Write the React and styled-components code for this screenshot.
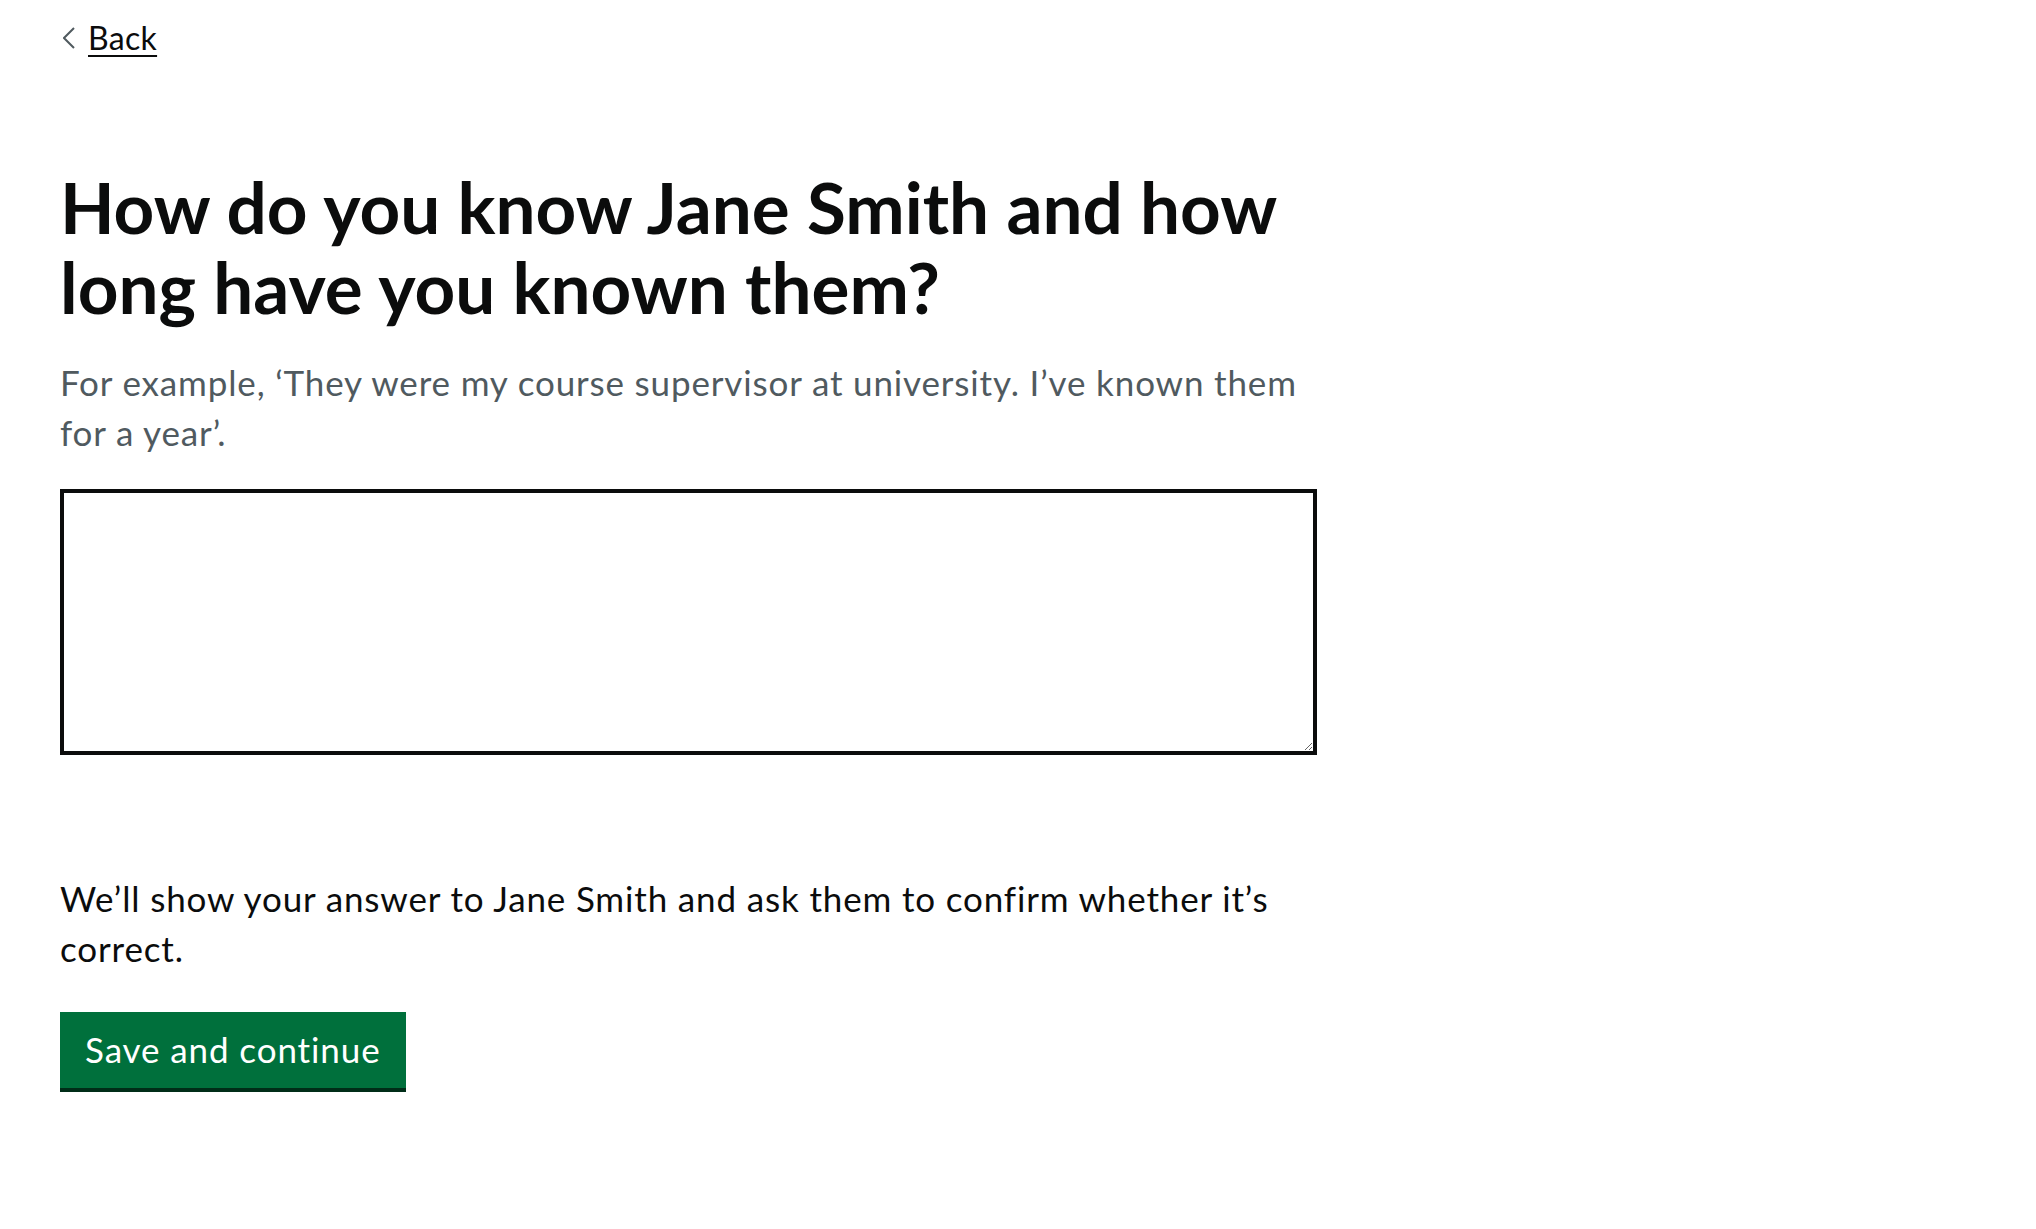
import React from "react";
import styled, { createGlobalStyle } from "styled-components";

const GlobalStyle = createGlobalStyle`
  html, body {
    margin: 0;
    padding: 0;
    background: #ffffff;
  }
  body {
    font-family: "Lato", "Liberation Sans", sans-serif;
    color: #0b0c0c;
  }
`;

export default function App() {
  return (
    <>
      <GlobalStyle />
      <Page>
        <BackLink href="#">
          <Chevron viewBox="0 0 12 22" aria-hidden="true">
            <polyline points="11,1 1,11 11,21" />
          </Chevron>
          <span>Back</span>
        </BackLink>

        <Main>
          <Heading>How do you know Jane Smith and how long have you known them?</Heading>
          <Hint>
            For example, ‘They were my course supervisor at university. I’ve known them for a
            year’.
          </Hint>
          <TextArea rows={5} aria-label="How do you know Jane Smith" />

          <Body>We’ll show your answer to Jane Smith and ask them to confirm whether it’s correct.</Body>
          <Button type="button">Save and continue</Button>
        </Main>
      </Page>
    </>
  );
}

const Page = styled.div`
  padding: 18px 60px 0;
`;

const BackLink = styled.a`
  display: inline-flex;
  align-items: center;
  gap: 13px;
  margin-left: 3px;
  font-size: 32px;
  line-height: 40px;
  letter-spacing: 0.3px;
  color: #0b0c0c;
  text-decoration: none;

  span {
    text-decoration: underline;
    text-decoration-thickness: 2px;
    text-underline-offset: 5px;
  }
`;

const Chevron = styled.svg`
  width: 12px;
  height: 22px;
  fill: none;
  stroke: #505a5f;
  stroke-width: 2;
`;

const Main = styled.main`
  width: 1257px;
  padding-top: 109px;
`;

const Heading = styled.h1`
  margin: 0 0 30px;
  font-size: 71px;
  line-height: 80px;
  font-weight: 700;
  color: #0b0c0c;
`;

const Hint = styled.div`
  margin: 0 0 32px;
  font-size: 35px;
  line-height: 50px;
  letter-spacing: 0.85px;
  color: #505a5f;
`;

const TextArea = styled.textarea`
  display: block;
  box-sizing: border-box;
  width: 100%;
  height: 266px;
  margin: 0 0 118px;
  padding: 10px;
  border: 4px solid #0b0c0c;
  border-radius: 0;
  font-family: inherit;
  font-size: 35px;
  line-height: 50px;
  resize: vertical;
  outline: none;
`;

const Body = styled.p`
  margin: 0 0 39px;
  font-size: 35px;
  line-height: 50px;
  letter-spacing: 0.85px;
`;

const Button = styled.button`
  display: inline-block;
  box-sizing: border-box;
  height: 76px;
  margin-bottom: 4px;
  padding: 12px 25px 14px;
  border: none;
  border-radius: 0;
  background: #00703c;
  box-shadow: 0 4px 0 #002d18;
  color: #ffffff;
  font-family: inherit;
  font-size: 35px;
  line-height: 50px;
  letter-spacing: 0.9px;
  cursor: pointer;
`;
